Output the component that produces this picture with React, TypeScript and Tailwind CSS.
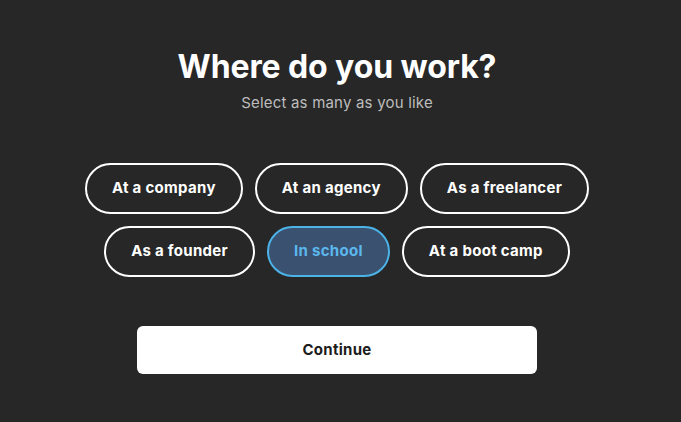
import React from "react";

const options = [
  ["At a company", "At an agency", "As a freelancer"],
  ["As a founder", "In school", "At a boot camp"],
];

export default function App() {
  return (
    <div
      className="w-[681px] h-[422px] bg-[#272727] flex"
      style={{ fontFamily: "Inter, 'Liberation Sans', sans-serif" }}
    >
      <div className="w-[674px] flex flex-col items-center pt-[48px]">
        <h1 className="text-[32px] leading-[38px] font-bold text-white tracking-[-0.1px]">Where do you work?</h1>
        <p className="mt-[8px] text-[15px] leading-[18px] text-[#bdbdbd] tracking-[0.2px]">Select as many as you like</p>
        <div className="mt-[51px] flex flex-col items-center gap-[12px]">
          {options.map((row, i) => (
            <div key={i} className="flex gap-[12px]">
              {row.map((o) => {
                const sel = o === "In school";
                return (
                  <button
                    key={o}
                    className={
                      sel
                        ? "h-[51px] px-[25px] rounded-full border-2 border-[#4cb3e9] bg-[#3b5170] text-[#5bb8ee] text-[15px] font-bold tracking-[0.3px]"
                        : "h-[51px] px-[25px] rounded-full border-2 border-white text-white text-[15px] font-bold tracking-[0.3px]"
                    }
                  >
                    {o}
                  </button>
                );
              })}
            </div>
          ))}
        </div>
        <button className="mt-[49px] w-[400px] h-[48px] rounded-[6px] bg-white text-[#1c1c1c] text-[15px] font-bold tracking-[0.3px]">
          Continue
        </button>
      </div>
    </div>
  );
}
